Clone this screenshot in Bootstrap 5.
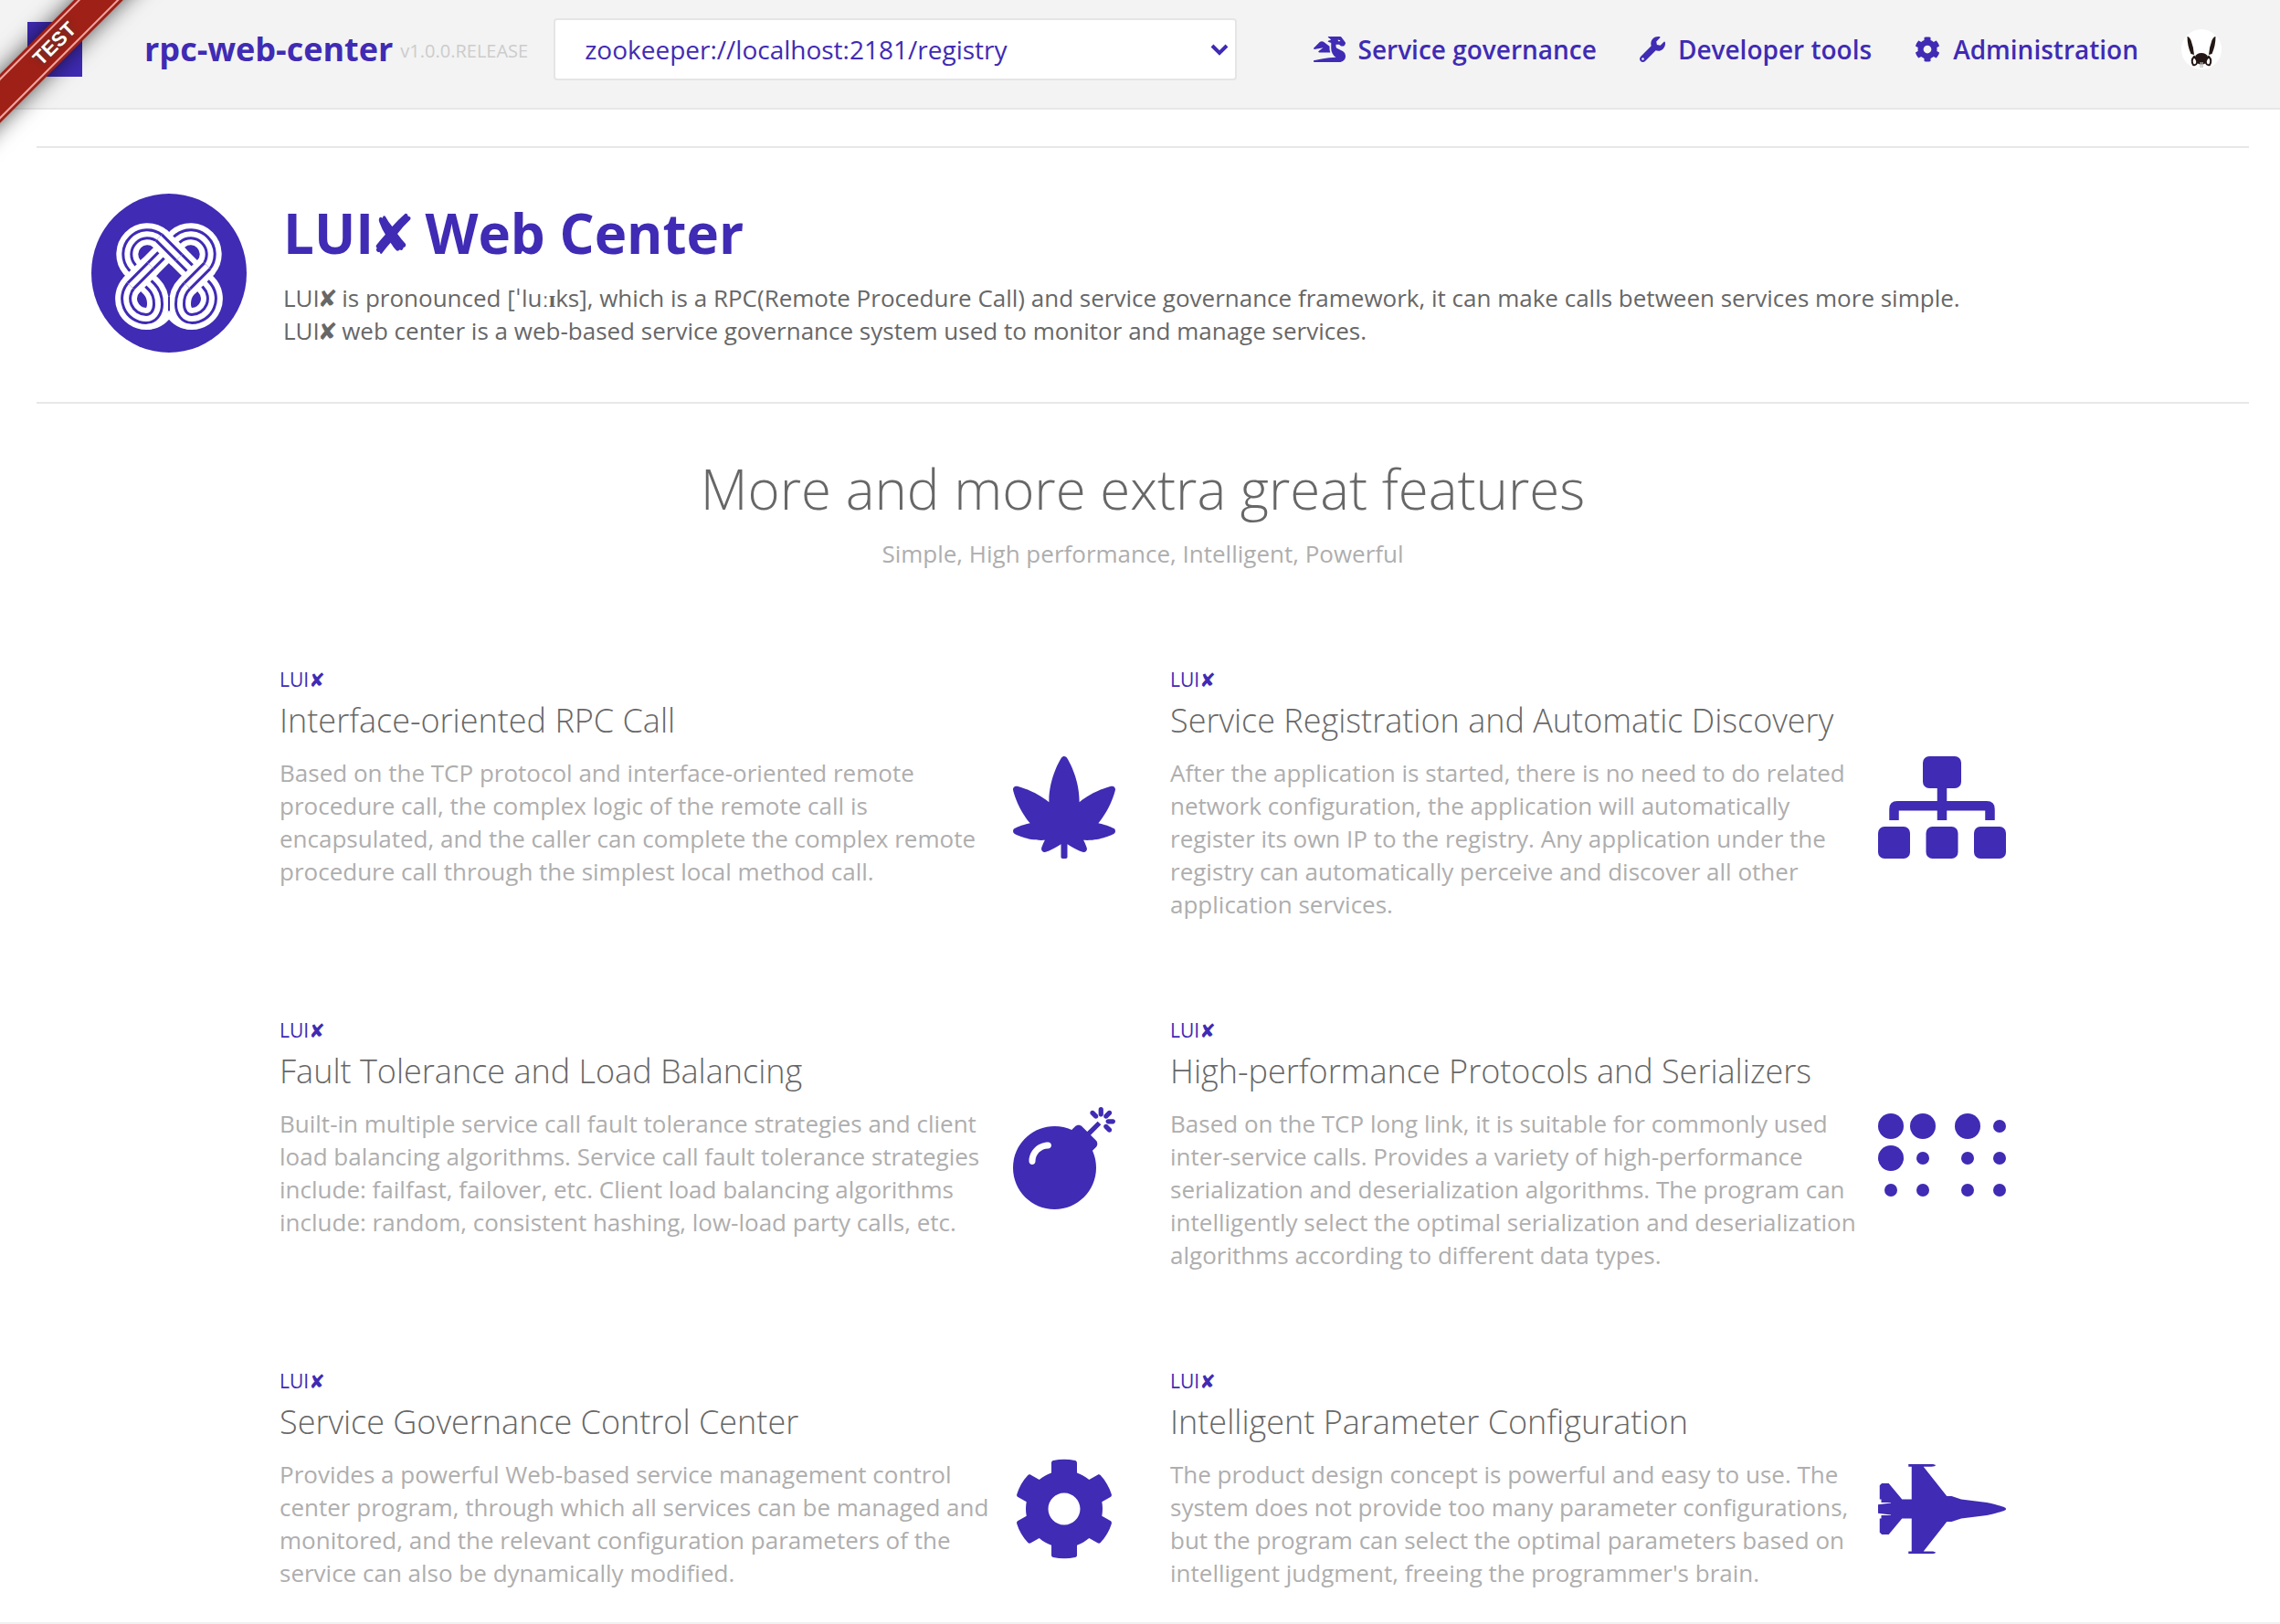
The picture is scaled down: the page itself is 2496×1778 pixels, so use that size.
<!DOCTYPE html>
<html lang="en">
<head>
<meta charset="utf-8">
<meta name="viewport" content="width=device-width, initial-scale=1">
<title>LUI✘ Web Center</title>
<link href="https://cdn.jsdelivr.net/npm/bootstrap@5.3.0/dist/css/bootstrap.min.css" rel="stylesheet">
<style>
:root{--brand:#3f2bb4;--ink:#676767;--soft:#aeaeae;--line:#e7e7e7}
body{font-family:"Open Sans","DejaVu Sans",sans-serif;font-size:26px;line-height:36px;color:var(--ink);background:#fff}
a{color:var(--brand)}
.topbar{background:#f3f3f3;border-bottom:2px solid var(--line);height:120px;padding:0 64px 10px 30px}
.brand-tile{width:60px;height:60px;background:var(--brand)}
.brand-link{margin-left:68px;font-size:36px;font-weight:700;line-height:48px}
.brand-version{margin-left:8px;font-size:20px;color:#ccc}
.registry{width:748px;height:68px;margin-left:28px;padding:0 60px 0 32px;border:2px solid #e5e5e5;border-radius:4px;font-size:28px;color:var(--brand);background-color:#fff;
background-image:url("data:image/svg+xml,%3Csvg xmlns='http://www.w3.org/2000/svg' viewBox='0 0 20 13'%3E%3Cpath d='M2 2l8 8 8-8' fill='none' stroke='%233f2bb4' stroke-width='4'/%3E%3C/svg%3E");background-size:20px 13px;background-position:right 7px center}
.main-nav{gap:47px}
.main-nav a{gap:14px;font-size:28px;font-weight:600}
.main-nav svg{height:28px;fill:currentColor}
.main-nav .avatar{width:44px;height:44px}
.corner{position:absolute;left:0;top:0;width:180px;height:180px;overflow:hidden;pointer-events:none;z-index:5}
.ribbon{position:absolute;left:-90px;top:29px;width:300px;height:38px;padding:3px 0;background:#9f2016;box-shadow:0 0 24px rgba(0,0,0,.65);transform:rotate(-45deg)}
.ribbon span{display:block;height:32px;border:solid #f3a5a0;border-width:2px 0;text-align:center;font:700 22px/28px "Liberation Sans",sans-serif;color:#fff;text-shadow:0 0 6px rgba(60,60,60,.8)}
.page-main{padding:40px 34px 36px 40px}
.hero{border:solid var(--line);border-width:2px 0;padding:50px 60px 54px}
.hero-logo{width:170px;height:174px}
.hero-text{margin-left:40px}
.hero h1{font-size:60px;line-height:86px;font-weight:700;color:var(--brand);margin-bottom:10px}
.mark-x{margin:0 -.08em}
.ipa{font-family:"Liberation Serif",serif;font-weight:700;line-height:1}
.intro{padding-top:48px;margin-bottom:104px;color:var(--soft)}
.intro h2{font-size:60px;line-height:90px;font-weight:300;color:var(--ink);margin-bottom:8px}
.features{max-width:1890px}
.features .row{--bs-gutter-x:60px;row-gap:104px}
.feature{gap:24px}
.feature-tag{font-size:21px;line-height:32px;color:var(--brand)}
.feature h3{font-size:36px;line-height:58px;font-weight:300;margin-bottom:10px}
.feature p{color:var(--soft)}
.feature svg{height:112px;margin-top:100px;fill:var(--brand)}
.page-end{border-top:2px solid #f1f1f1}
</style>
<script src="https://cdn.jsdelivr.net/npm/bootstrap@5.3.0/dist/js/bootstrap.bundle.min.js"></script>
</head>
<body>
<svg width="0" height="0" class="position-absolute" aria-hidden="true"><defs>
<symbol id="cog" viewBox="0 0 512 512"><path d="M487.4 315.7l-42.6-24.6c4.3-23.2 4.3-47 0-70.2l42.6-24.6c4.9-2.8 7.1-8.6 5.5-14-11.1-35.6-30-67.8-54.7-94.6-3.8-4.1-10-5.1-14.8-2.3L380.8 110c-17.9-15.4-38.5-27.3-60.8-35.1V25.8c0-5.6-3.9-10.5-9.4-11.7-36.7-8.2-74.3-7.8-109.2 0-5.5 1.2-9.4 6.1-9.4 11.7V75c-22.2 7.9-42.8 19.8-60.8 35.1L88.7 85.5c-4.9-2.8-11-1.9-14.8 2.3-24.7 26.7-43.6 58.9-54.7 94.6-1.7 5.4.6 11.2 5.5 14L67.3 221c-4.3 23.2-4.3 47 0 70.2l-42.6 24.6c-4.9 2.8-7.1 8.6-5.5 14 11.1 35.6 30 67.8 54.7 94.6 3.8 4.1 10 5.1 14.8 2.3l42.6-24.6c17.9 15.4 38.5 27.3 60.8 35.1v49.2c0 5.6 3.9 10.5 9.4 11.7 36.7 8.2 74.3 7.8 109.2 0 5.5-1.2 9.4-6.1 9.4-11.7v-49.2c22.2-7.9 42.8-19.8 60.8-35.1l42.6 24.6c4.9 2.8 11 1.9 14.8-2.3 24.7-26.7 43.6-58.9 54.7-94.6 1.5-5.5-.7-11.3-5.6-14.1zM256 336c-44.1 0-80-35.9-80-80s35.9-80 80-80 80 35.9 80 80-35.9 80-80 80z"/></symbol>
<path id="knot" d="M-40.5 9.5L9.5-40.5A22 22 0 0 1 40.5-9.500L19 12C13 18 12 24 12 31C12 40 17 47 25 47A22 22 0 0 0 40.500 9.500L-9.500-40.500A22 22 0 0 0-40.500-9.500L-19 12C-13 18-12 24-12 31C-12 40-17 47-25 47A22 22 0 0 1-40.500 9.500Z"/>
<path id="bridge" d="M-11-42L11-20M-42 11L-20-11M42-11L20 11"/>
</defs></svg>

<header class="topbar d-flex align-items-center">
  <div class="brand-tile flex-shrink-0"></div>
  <a class="brand-link text-decoration-none text-nowrap" href="#">rpc-web-center</a>
  <span class="brand-version align-self-center pt-1">v1.0.0.RELEASE</span>
  <select class="form-select registry flex-shrink-0" aria-label="Registry"><option>zookeeper://localhost:2181/registry</option></select>
  <nav class="main-nav d-flex align-items-center ms-auto text-nowrap">
    <a class="d-flex align-items-center text-decoration-none" href="#"><svg viewBox="0 0 640 512"><path d="M18.32 255.78L192 223.96l-91.28 68.69c-10.08 10.08-2.94 27.31 11.31 27.31h222.7c-9.44-26.4-14.73-54.47-14.73-83.38v-42.27l-119.73-87.6c-23.82-15.88-55.29-14.01-77.06 4.59L5.81 227.64c-12.38 10.33-3.45 30.42 12.51 28.14zm556.87 34.1l-100.66-50.31A47.992 47.992 0 0 1 448 196.65v-36.69h64l28.09 22.63c6 6 14.14 9.37 22.63 9.37h30.97a32 32 0 0 0 28.62-17.69l14.31-28.62a32.005 32.005 0 0 0-3.02-33.51l-74.53-99.38C553.02 4.7 543.54 0 533.47 0H296.02c-7.13 0-10.7 8.57-5.66 13.61L352 63.96 292.42 88.8c-5.9 2.95-5.9 11.36 0 14.31L352 127.96v108.62c0 72.08 36.03 139.39 96 179.38-195.59 6.81-344.56 41.01-434.1 60.91C5.78 478.67 0 485.88 0 494.2 0 504 7.95 512 17.76 512h499.08c63.29.01 119.61-47.56 122.99-110.76 2.52-47.28-22.73-90.4-64.64-111.36zM489.18 66.25l45.65 11.41c-2.75 10.91-12.47 18.89-24.13 18.26-12.96-.71-25.85-12.53-21.52-29.67z"/></svg>Service governance</a>
    <a class="d-flex align-items-center text-decoration-none" href="#"><svg viewBox="0 0 512 512"><path d="M507.73 109.1c-2.24-9.03-13.54-12.09-20.12-5.51l-74.36 74.36-67.88-11.31-11.31-67.88 74.36-74.36c6.62-6.62 3.43-17.9-5.66-20.16-47.38-11.74-99.55.91-136.58 37.93-39.64 39.64-50.55 97.1-34.05 147.2L18.74 402.76c-24.99 24.99-24.99 65.51 0 90.5 24.99 24.99 65.51 24.99 90.5 0l213.21-213.21c50.12 16.71 107.47 5.68 147.37-34.22 37.07-37.07 49.7-89.32 37.91-136.73zM64 472c-13.25 0-24-10.75-24-24 0-13.26 10.75-24 24-24s24 10.74 24 24c0 13.25-10.75 24-24 24z"/></svg>Developer tools</a>
    <a class="d-flex align-items-center text-decoration-none" href="#"><svg viewBox="0 0 512 512"><use href="#cog"/></svg>Administration</a>
    <a class="d-block" href="#" aria-label="Account"><svg class="avatar d-block" viewBox="0 0 44 44"><circle cx="22" cy="22" r="22" fill="#fff"/><g fill="#231815"><path d="M6.500 8q2 0 4 4q3 8 3.500 16l-3.500-1q-4-9-4-19zM37.500 8q-2 0-4 4q-3 8-3.500 16l3.500-1q4-9 4-19z"/><path d="M15 30q2-4 7-4t7 4l-2 7q-5 3-10 0z"/></g><g fill="#fff" stroke="#231815" stroke-width="2"><path d="M14 30q-4 4-1 9q3 1 4-2t-3-7zM30 30q4 4 1 9q-3 1-4-2t3-7z"/></g><path d="M20.500 36v6h1.200v-6zM22.500 36v6h1.200v-6z" fill="#bbb"/></svg></a>
  </nav>
</header>
<div class="corner"><div class="ribbon"><span>TEST</span></div></div>

<main class="page-main">
  <section class="hero d-flex">
    <svg class="hero-logo flex-shrink-0" viewBox="0 0 170 174"><ellipse cx="85" cy="87" rx="85" ry="87" fill="#3f2bb4"/><g transform="translate(85 90)" fill="none"><g stroke="#fff" stroke-width="24"><use href="#knot"/></g><g stroke="#3f2bb4" stroke-width="12"><use href="#knot"/></g><g stroke="#fff" stroke-width="6"><use href="#knot"/></g><g stroke="#fff" stroke-width="24"><use href="#bridge"/></g><g stroke="#3f2bb4" stroke-width="12"><use href="#bridge"/></g><g stroke="#fff" stroke-width="6"><use href="#bridge"/></g><path d="M-25 56A31 31 0 0 0 0 43A31 31 0 0 0 25 56" stroke="#fff" stroke-width="6"/><path d="M0 23V38" stroke="#3f2bb4" stroke-width="2"/></g></svg>
    <div class="hero-text">
      <h1>LUI<span class="mark-x">✘</span> Web Center</h1>
      <p class="mb-0">LUI<span class="mark-x">✘</span> is pronounced [ˈlu<span class="ipa">ːɪ</span>ks], which is a RPC(Remote Procedure Call) and service governance framework, it can make calls between services more simple.<br>LUI<span class="mark-x">✘</span> web center is a web-based service governance system used to monitor and manage services.</p>
    </div>
  </section>

  <section class="intro text-center">
    <h2>More and more extra great features</h2>
    <p class="mb-0">Simple, High performance, Intelligent, Powerful</p>
  </section>

  <section class="features mx-auto">
    <div class="row">
      <div class="col-6"><article class="feature d-flex">
        <div class="flex-fill"><div class="feature-tag">LUI✘</div><h3>Interface-oriented RPC Call</h3><p class="mb-0">Based on the TCP protocol and interface-oriented remote procedure call, the complex logic of the remote call is encapsulated, and the caller can complete the complex remote procedure call through the simplest local method call.</p></div>
        <svg class="flex-shrink-0" viewBox="0 0 512 512"><path d="M503.47 360.25c-1.56-.82-32.39-16.89-76.78-25.81 64.25-75.12 84.05-161.67 84.93-165.64 1.18-5.33-.44-10.9-4.3-14.77-3.03-3.04-7.12-4.7-11.32-4.7-1.14 0-2.29.12-3.44.38-3.88.85-86.54 19.59-160.58 79.76.01-1.46.01-2.93.01-4.4 0-118.79-59.98-213.72-62.53-217.7A15.973 15.973 0 0 0 256 0c-5.450 0-10.530 2.780-13.470 7.370-2.550 3.980-62.530 98.910-62.530 217.700 0 1.470.01 2.940.01 4.400-74.030-60.160-156.690-78.900-160.580-79.760-1.140-.25-2.290-.38-3.440-.38-4.200 0-8.290 1.660-11.320 4.700A15.986 15.986 0 0 0 .38 168.800c.88 3.970 20.680 90.520 84.930 165.640-44.390 8.920-75.210 24.990-76.780 25.810a16.003 16.003 0 0 0-.02 28.290c2.450 1.290 60.760 31.720 133.490 31.720 6.140 0 11.960-.1 17.500-.31-11.370 22.230-16.520 38.310-16.810 39.220-1.800 5.680-.29 11.890 3.910 16.110a16.019 16.019 0 0 0 16.100 3.990c1.830-.57 37.720-11.990 77.300-39.290V504c0 4.420 3.580 8 8 8h16c4.420 0 8-3.580 8-8v-64.010c39.580 27.300 75.470 38.710 77.300 39.290a16.019 16.019 0 0 0 16.100-3.990c4.200-4.220 5.710-10.430 3.910-16.110-.29-.91-5.450-16.990-16.810-39.220 5.540.21 11.370.31 17.500.31 72.720 0 131.040-30.430 133.490-31.720 5.240-2.780 8.520-8.220 8.510-14.150-.01-5.940-3.290-11.390-8.530-14.150z"/></svg>
      </article></div>
      <div class="col-6"><article class="feature d-flex">
        <div class="flex-fill"><div class="feature-tag">LUI✘</div><h3>Service Registration and Automatic Discovery</h3><p class="mb-0">After the application is started, there is no need to do related network configuration, the application will automatically register its own IP to the registry. Any application under the registry can automatically perceive and discover all other application services.</p></div>
        <svg class="flex-shrink-0" viewBox="0 0 640 512"><rect x="224" width="192" height="160" rx="32"/><rect y="352" width="160" height="160" rx="32"/><rect x="240" y="352" width="160" height="160" rx="32"/><rect x="480" y="352" width="160" height="160" rx="32"/><path d="M296 150h48v74h200q40 0 40 40v56h-48v-48H344v48h-48v-48H104v48H56v-56q0-40 40-40h200z"/></svg>
      </article></div>
      <div class="col-6"><article class="feature d-flex">
        <div class="flex-fill"><div class="feature-tag">LUI✘</div><h3>Fault Tolerance and Load Balancing</h3><p class="mb-0">Built-in multiple service call fault tolerance strategies and client load balancing algorithms. Service call fault tolerance strategies include: failfast, failover, etc. Client load balancing algorithms include: random, consistent hashing, low-load party calls, etc.</p></div>
        <svg class="flex-shrink-0" viewBox="0 0 512 512"><path d="M440.500 88.500l-52 52L415 167c9.400 9.400 9.400 24.600 0 33.900l-17.400 17.400c11.800 26.100 18.400 55.100 18.400 85.600 0 114.900-93.100 208-208 208S0 418.900 0 304 93.100 96 208 96c30.500 0 59.500 6.600 85.600 18.400L311 97c9.400-9.400 24.600-9.400 33.900 0l26.500 26.500 52-52 17.100 17zM500 60h-24c-6.600 0-12 5.400-12 12s5.400 12 12 12h24c6.600 0 12-5.400 12-12s-5.400-12-12-12zM440 0c-6.600 0-12 5.400-12 12v24c0 6.600 5.400 12 12 12s12-5.400 12-12V12c0-6.600-5.400-12-12-12zm33.900 55l17-17c4.700-4.700 4.700-12.300 0-17-4.700-4.700-12.300-4.700-17 0l-17 17c-4.700 4.700-4.700 12.300 0 17 4.800 4.700 12.400 4.700 17 0zm-67.800 0c4.700 4.700 12.300 4.700 17 0 4.700-4.700 4.700-12.300 0-17l-17-17c-4.700-4.700-12.300-4.700-17 0-4.700 4.700-4.700 12.300 0 17l17 17zm67.800 34c-4.700-4.700-12.300-4.700-17 0-4.700 4.700-4.700 12.300 0 17l17 17c4.700 4.700 12.300 4.700 17 0 4.700-4.700 4.700-12.300 0-17l-17-17zM112 272c0-35.300 28.700-64 64-64 8.800 0 16-7.200 16-16s-7.200-16-16-16c-52.900 0-96 43.100-96 96 0 8.800 7.200 16 16 16s16-7.200 16-16z" fill-rule="evenodd"/></svg>
      </article></div>
      <div class="col-6"><article class="feature d-flex">
        <div class="flex-fill"><div class="feature-tag">LUI✘</div><h3>High-performance Protocols and Serializers</h3><p class="mb-0">Based on the TCP long link, it is suitable for commonly used inter-service calls. Provides a variety of high-performance serialization and deserialization algorithms. The program can intelligently select the optimal serialization and deserialization algorithms according to different data types.</p></div>
        <svg class="flex-shrink-0" viewBox="0 0 640 512"><circle cx="64" cy="96" r="64"/><circle cx="224" cy="96" r="64"/><circle cx="448" cy="96" r="64"/><circle cx="608" cy="96" r="32"/><circle cx="64" cy="256" r="64"/><circle cx="224" cy="256" r="32"/><circle cx="448" cy="256" r="32"/><circle cx="608" cy="256" r="32"/><circle cx="64" cy="416" r="32"/><circle cx="224" cy="416" r="32"/><circle cx="448" cy="416" r="32"/><circle cx="608" cy="416" r="32"/></svg>
      </article></div>
      <div class="col-6"><article class="feature d-flex">
        <div class="flex-fill"><div class="feature-tag">LUI✘</div><h3>Service Governance Control Center</h3><p class="mb-0">Provides a powerful Web-based service management control center program, through which all services can be managed and monitored, and the relevant configuration parameters of the service can also be dynamically modified.</p></div>
        <svg class="flex-shrink-0" viewBox="0 0 512 512"><use href="#cog"/></svg>
      </article></div>
      <div class="col-6"><article class="feature d-flex">
        <div class="flex-fill"><div class="feature-tag">LUI✘</div><h3>Intelligent Parameter Configuration</h3><p class="mb-0">The product design concept is powerful and easy to use. The system does not provide too many parameter configurations, but the program can select the optimal parameters based on intelligent judgment, freeing the programmer's brain.</p></div>
        <svg class="flex-shrink-0" viewBox="0 0 640 512"><path d="M544 224l-128-16-48-16h-24L227.158 44h39.509C278.333 44 288 41.375 288 38s-9.667-6-21.333-6H152v12h16v164h-48l-66.667-80H18.667L8 138.667V208h8v16h48v2.666l-64 8v42.667l64 8V288H16v16H8v69.333L18.667 384h34.667L120 304h48v164h-16v12h114.667c11.667 0 21.333-2.625 21.333-6s-9.667-6-21.333-6h-39.509L344 320h24l48-16 128-16c96-21.333 96-26.583 96-32 0-5.417 0-10.667-96-32z"/></svg>
      </article></div>
    </div>
  </section>
</main>
<footer class="page-end"></footer>
</body>
</html>
